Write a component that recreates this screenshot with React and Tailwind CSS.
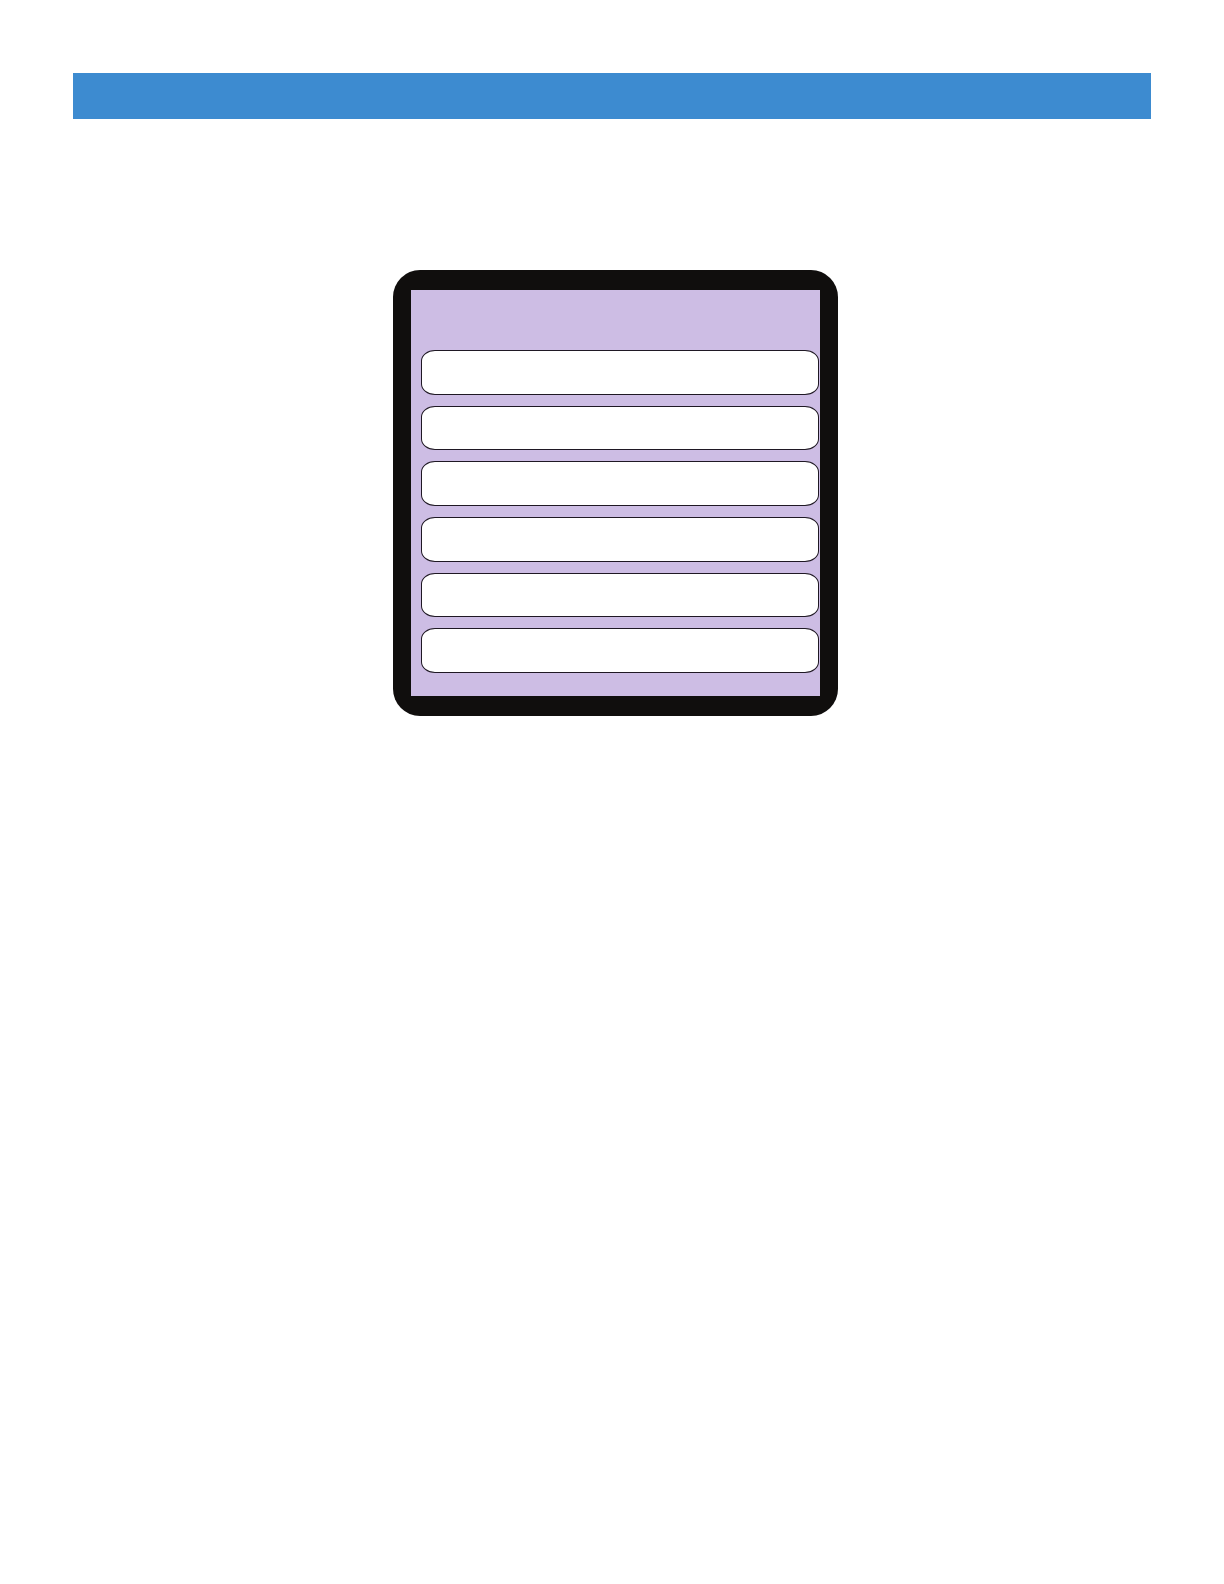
const rows = [1, 2, 3, 4, 5, 6];

function Device() {
  return (
    <section className="w-full max-w-[445px] rounded-[27px] bg-[#100e0d] px-[18px] py-5">
      <div className="bg-[#cdbde4] pt-[60px] pr-px pb-[23px] pl-[10px]">
        <ul className="grid h-[323px] grid-rows-6 gap-[11px]">
          {rows.map((row) => (
            <li
              key={row}
              className="rounded-[14px/11px] border border-[#1f1824] bg-white"
            />
          ))}
        </ul>
      </div>
    </section>
  );
}

export default function App() {
  return (
    <div className="min-h-screen bg-white px-[73px] pt-[73px] font-['Liberation_Sans',sans-serif]">
      <header className="h-[46px] bg-[#3d8bd0]" />
      <main className="mt-[151px] flex justify-center pl-[7px]">
        <Device />
      </main>
    </div>
  );
}
